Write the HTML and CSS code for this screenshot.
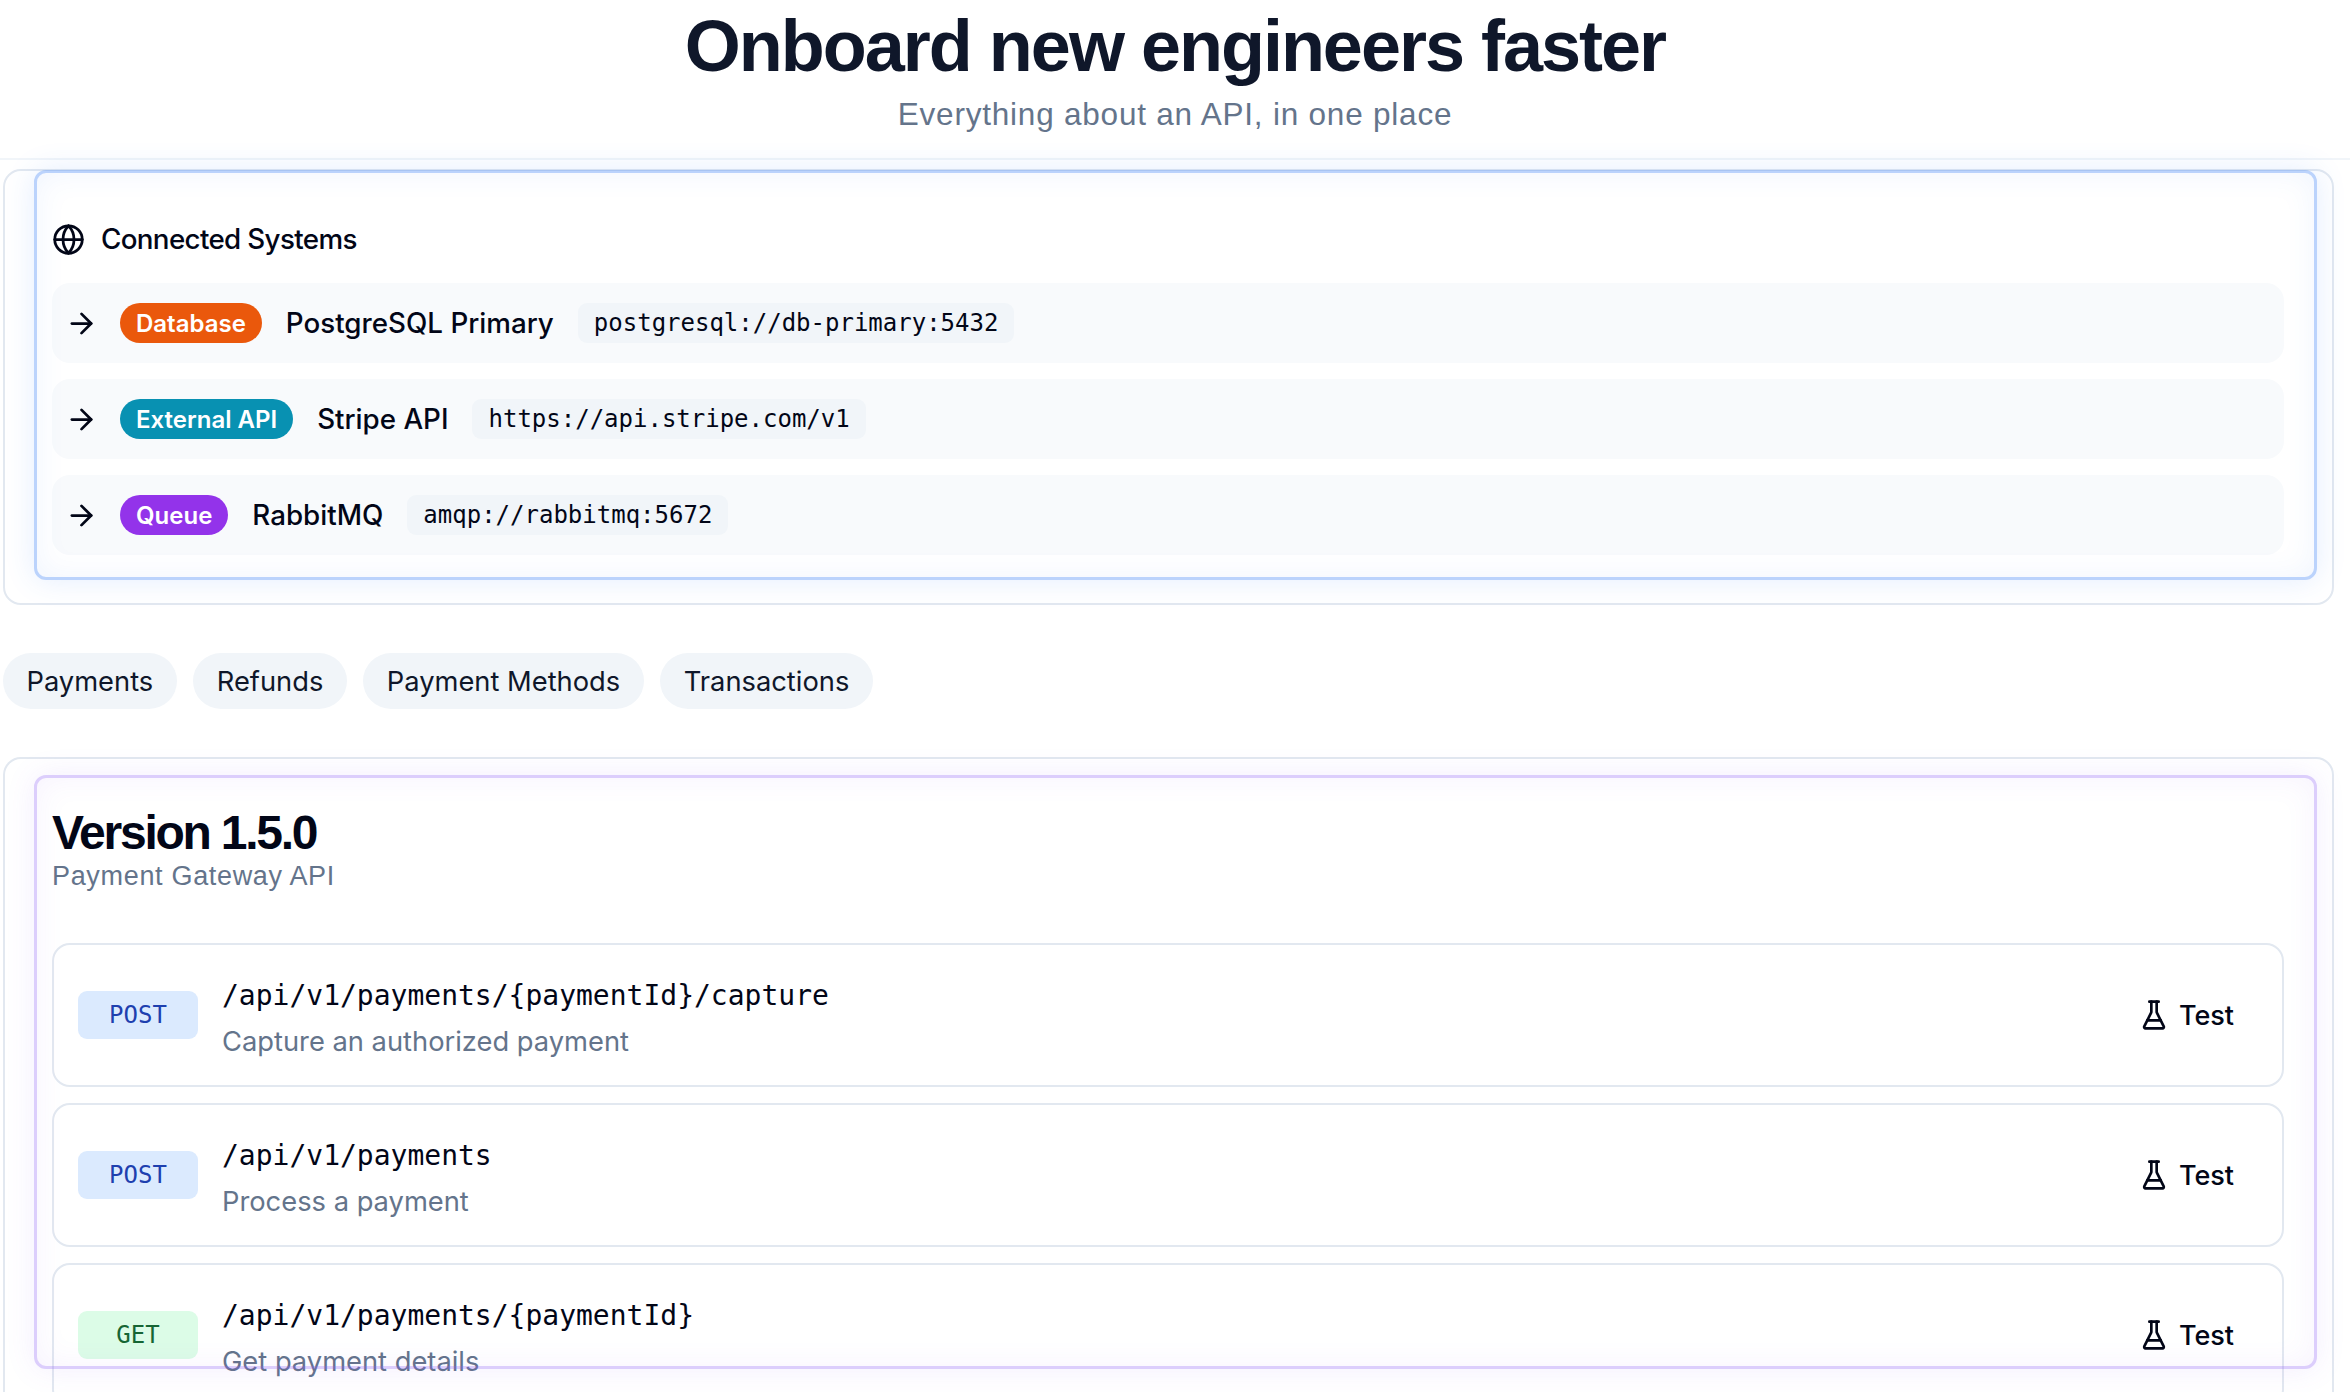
FILE: index.html
```html
<!DOCTYPE html>
<html lang="en">
<head>
<meta charset="utf-8">
<title>Onboard new engineers faster</title>
<link rel="stylesheet" href="styles.css">
</head>
<body>
<header class="hero">
  <h1>Onboard new engineers faster</h1>
  <p>Everything about an API, in one place</p>
</header>
<main class="page">
  <section class="card systems-card">
    <div class="highlight highlight-blue"></div>
    <div class="systems">
      <h2 class="systems-title">
        <svg class="icon" viewBox="0 0 24 24"><circle cx="12" cy="12" r="10"/><path d="M12 2a14.5 14.5 0 0 0 0 20 14.5 14.5 0 0 0 0-20"/><path d="M2 12h20"/></svg>
        Connected Systems
      </h2>
      <div class="system">
        <svg class="icon" viewBox="0 0 24 24"><path d="M5 12h14"/><path d="m12 5 7 7-7 7"/></svg>
        <span class="pill pill-orange">Database</span>
        <span class="system-name">PostgreSQL Primary</span>
        <code class="url">postgresql://db-primary:5432</code>
      </div>
      <div class="system">
        <svg class="icon" viewBox="0 0 24 24"><path d="M5 12h14"/><path d="m12 5 7 7-7 7"/></svg>
        <span class="pill pill-cyan">External API</span>
        <span class="system-name">Stripe API</span>
        <code class="url">https://api.stripe.com/v1</code>
      </div>
      <div class="system">
        <svg class="icon" viewBox="0 0 24 24"><path d="M5 12h14"/><path d="m12 5 7 7-7 7"/></svg>
        <span class="pill pill-purple">Queue</span>
        <span class="system-name">RabbitMQ</span>
        <code class="url">amqp://rabbitmq:5672</code>
      </div>
    </div>
  </section>
  <nav class="tabs">
    <button class="tab">Payments</button>
    <button class="tab">Refunds</button>
    <button class="tab">Payment Methods</button>
    <button class="tab">Transactions</button>
  </nav>
  <section class="card version-card">
    <div class="highlight highlight-purple"></div>
    <div class="version">
      <h2 class="version-title">Version 1.5.0</h2>
      <p class="version-sub">Payment Gateway API</p>
      <div class="endpoints">
        <article class="endpoint">
          <span class="method method-post">POST</span>
          <div class="endpoint-info">
            <code class="path">/api/v1/payments/{paymentId}/capture</code>
            <span class="desc">Capture an authorized payment</span>
          </div>
          <button class="test"><svg class="icon" viewBox="0 0 24 24"><path d="M10 2v7.527a2 2 0 0 1-.211.896L4.72 20.55a1 1 0 0 0 .9 1.45h12.76a1 1 0 0 0 .9-1.45l-5.069-10.127A2 2 0 0 1 14 9.527V2"/><path d="M8.5 2h7"/><path d="M7 16h10"/></svg>Test</button>
        </article>
        <article class="endpoint">
          <span class="method method-post">POST</span>
          <div class="endpoint-info">
            <code class="path">/api/v1/payments</code>
            <span class="desc">Process a payment</span>
          </div>
          <button class="test"><svg class="icon" viewBox="0 0 24 24"><path d="M10 2v7.527a2 2 0 0 1-.211.896L4.72 20.55a1 1 0 0 0 .9 1.45h12.76a1 1 0 0 0 .9-1.45l-5.069-10.127A2 2 0 0 1 14 9.527V2"/><path d="M8.5 2h7"/><path d="M7 16h10"/></svg>Test</button>
        </article>
        <article class="endpoint">
          <span class="method method-get">GET</span>
          <div class="endpoint-info">
            <code class="path">/api/v1/payments/{paymentId}</code>
            <span class="desc">Get payment details</span>
          </div>
          <button class="test"><svg class="icon" viewBox="0 0 24 24"><path d="M10 2v7.527a2 2 0 0 1-.211.896L4.72 20.55a1 1 0 0 0 .9 1.45h12.76a1 1 0 0 0 .9-1.45l-5.069-10.127A2 2 0 0 1 14 9.527V2"/><path d="M8.5 2h7"/><path d="M7 16h10"/></svg>Test</button>
        </article>
      </div>
    </div>
  </section>
</main>
</body>
</html>
```
FILE: styles.css
```css
* { box-sizing: border-box; }
html, body { margin: 0; height: 100%; overflow: hidden; }
body { font-family: Inter, "Liberation Sans", sans-serif; color: #0f172a; background: #fff; }

.hero { height: 160px; border-bottom: 2px solid #f1f5f9; text-align: center; padding-top: 6px; font-family: "Liberation Sans", Arial, sans-serif; }
.hero h1 { margin: 0; font-size: 72px; line-height: 80px; font-weight: 700; letter-spacing: -2px; color: #0f172a; }
.hero p { margin: 8px 0 0; font-size: 31.5px; line-height: 40px; letter-spacing: .025em; color: #64748b; }

.page { padding: 9px 16px 0 3px; }
.card { position: relative; border: 2px solid #e2e8f0; border-radius: 18px; background: #fff; }
.systems-card { height: 436px; }
.version-card { height: 700px; }

.highlight { position: absolute; left: 29px; right: 15px; border-radius: 12px; pointer-events: none; z-index: 2; }
.highlight-blue { top: -1px; height: 410px; border: 3px solid rgba(59,130,246,.35); box-shadow: 0 0 30px rgba(59,130,246,.14), inset 0 0 30px rgba(59,130,246,.08); }
.highlight-purple { top: 16px; height: 594px; border: 3px solid rgba(139,92,246,.3); box-shadow: 0 0 30px rgba(139,92,246,.1), inset 0 0 30px rgba(139,92,246,.07); }

.systems { padding: 50px 48px 0 47px; display: flex; flex-direction: column; gap: 16px; }
.systems-title { margin: 0 0 10px; display: flex; align-items: center; gap: 16px; font-size: 27.75px; line-height: 36px; font-weight: 500; letter-spacing: -.65px; color: #020617; }
.icon { width: 33px; height: 33px; flex: none; fill: none; stroke: currentColor; stroke-width: 2; stroke-linecap: round; stroke-linejoin: round; }

.system { height: 80px; display: flex; align-items: center; gap: 22px; padding: 0 13px; background: #f8fafc; border-radius: 18px; color: #020617; }
.pill { height: 40px; padding: 0 16px; border-radius: 20px; display: flex; align-items: center; color: #fff; font-size: 24px; font-weight: 600; }
.pill-orange { background: #ea580c; }
.pill-cyan { background: #0891b2; }
.pill-purple { background: #9333ea; }
.system-name { margin: 0 2px; font-size: 27.75px; font-weight: 500; }
.url { height: 40px; padding: 0 16px; display: flex; align-items: center; background: #f1f5f9; border-radius: 9px; font-family: "DejaVu Sans Mono", monospace; font-size: 24px; }

.tabs { display: flex; gap: 16.5px; margin: 48px 0; }
.tab { height: 56px; padding: 0 23.5px; border: 0; border-radius: 28px; background: #f1f5f9; color: #0f172a; font-family: inherit; font-size: 27.3px; font-weight: 400; }

.version { padding: 50px 48px 0 47px; font-family: "Liberation Sans", Arial, sans-serif; }
.version-title { margin: 0; font-size: 48px; line-height: 48px; font-weight: 700; letter-spacing: -2.25px; color: #020617; }
.version-sub { margin: 1px 0 49px; font-size: 27px; line-height: 36px; letter-spacing: .025em; color: #64748b; }
.endpoints { display: flex; flex-direction: column; gap: 16px; font-family: Inter, "Liberation Sans", sans-serif; }
.endpoint { height: 144px; flex: none; display: flex; align-items: center; gap: 24px; padding: 0 24px; border: 2px solid #e2e8f0; border-radius: 18px; background: #fff; }
.method { width: 120px; height: 48px; flex: none; display: flex; align-items: center; justify-content: center; border-radius: 9px; font-family: "DejaVu Sans Mono", monospace; font-size: 24px; }
.method-post { background: #dbeafe; color: #1e40af; }
.method-get { background: #dcfce7; color: #166534; }
.endpoint-info { flex: 1; display: flex; flex-direction: column; gap: 8.5px; padding-top: 6.5px; }
.path { font-family: "DejaVu Sans Mono", monospace; font-size: 28px; line-height: 38px; color: #020617; }
.desc { font-size: 27.3px; line-height: 36px; color: #64748b; }
.test { display: flex; align-items: center; gap: 9px; padding: 0 24px; height: 60px; border: 0; background: transparent; color: #020617; font-family: inherit; font-size: 27px; font-weight: 500; }
.test .icon { width: 32px; height: 32px; }
```
